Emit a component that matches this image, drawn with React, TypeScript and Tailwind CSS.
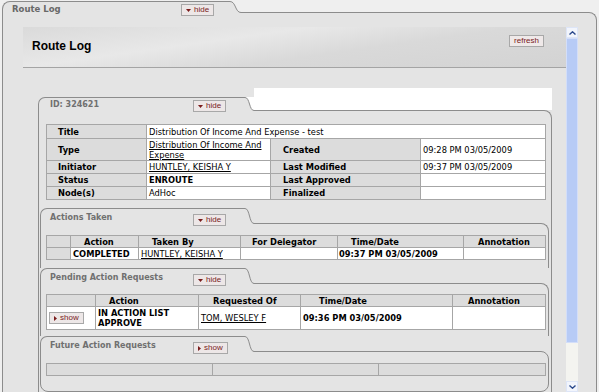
import React from 'react'

const LINE = 'border-[#8c8c8c]'
const CELL = 'border border-[#a6a6a6]'

function Curve({ h, w, above }: { h: number; w: number; above?: string }) {
  const y = h - 0.5
  return (
    <svg width={w} height={h} className="block shrink-0 relative z-10 -mb-px">
      {above && <path d={`M0 0 L${w} 0 L${w} ${y} C${w * 0.45} ${y} ${w * 0.55} 0.5 0 0.5 Z`} fill={above} />}
      <path d={`M0 0.5 C${w * 0.55} 0.5 ${w * 0.45} ${y} ${w} ${y} L${w} ${h} L0 ${h} Z`} fill="#e4e4e4" />
      <path d={`M0 0.5 C${w * 0.55} 0.5 ${w * 0.45} ${y} ${w} ${y}`} fill="none" stroke="#8c8c8c" strokeWidth="1" />
    </svg>
  )
}

function MiniButton({ label, dir }: { label: string; dir: 'down' | 'right' }) {
  return (
    <span className="flex items-center gap-[3px] h-[12px] px-[4px] border border-[#a8a8a8] bg-[#ede7e7] text-[#7a1c1c] text-[8px] leading-none font-['Liberation_Sans',Arial,sans-serif]">
      {dir === 'down' ? (
        <svg width="5" height="3"><path d="M0 0h5L2.5 3z" fill="#7a1c1c" /></svg>
      ) : (
        <svg width="3" height="5"><path d="M0 0v5l3-2.5z" fill="#7a1c1c" /></svg>
      )}
      {label}
    </span>
  )
}

interface SubProps {
  title: string
  btn: 'hide' | 'show'
  pt: string
  pb: string
  last?: boolean
  children: React.ReactNode
}

function SubSection({ title, btn, pt, pb, last, children }: SubProps) {
  return (
    <div className="flex flex-col">
      <div className="flex items-end h-[15px]">
        <div className={`relative z-10 -mb-px h-[16px] w-[205px] shrink-0 border-l border-t ${LINE} rounded-tl-[7px] bg-[#e4e4e4] flex items-start pl-[9px]`}>
          <span className="w-[143px] shrink-0 mt-[4px] text-[8px] font-bold text-[#707070] leading-[10px]">{title}</span>
          <span className="mt-[5px] flex"><MiniButton label={btn} dir={btn === 'hide' ? 'down' : 'right'} /></span>
        </div>
        <Curve h={16} w={9} />
      </div>
      <div className={`border-l border-r border-t ${LINE} rounded-tr-[8px] pl-[5px] ${pt} ${pb} ${last ? 'border-b rounded-b-[8px]' : ''}`}>
        {children}
      </div>
    </div>
  )
}

function Scrollbar() {
  return (
    <div className="w-[12px] h-full flex flex-col bg-[#f4f4f0]">
      <div className="h-[11px] flex items-center justify-center bg-[#f2f5fc] border border-[#dde5f7]">
        <svg width="7" height="4"><path d="M0.5 3.5 L3.5 0.8 L6.5 3.5" fill="none" stroke="#2b4a8c" strokeWidth="1.4" /></svg>
      </div>
      <div className="h-[305px] bg-[#b7cbf6] border border-[#d3def9]" />
      <div className="flex-1" />
      <div className="h-[11px] flex items-center justify-center bg-[#f2f5fc] border border-[#dde5f7]">
        <svg width="7" height="4"><path d="M0.5 0.5 L3.5 3.2 L6.5 0.5" fill="none" stroke="#2b4a8c" strokeWidth="1.4" /></svg>
      </div>
    </div>
  )
}

export default function App() {
  return (
    <div className="w-[599px] h-[392px] overflow-hidden bg-[#efefef] pt-[1px] pl-[2px] flex flex-col font-['DejaVu_Sans',Verdana,sans-serif] text-black leading-[10px]">
      {/* outer tab */}
      <div className="flex items-end h-[11px] shrink-0">
        <div className={`relative z-10 -mb-px h-[12px] w-[228px] shrink-0 border-l border-t ${LINE} rounded-tl-[8px] bg-[#e4e4e4] flex items-start pl-[9px]`}>
          <span className="w-[169px] shrink-0 mt-[2px] text-[8.5px] font-bold text-[#686868] leading-[10px]">Route Log</span>
          <span className="mt-[2px] flex"><MiniButton label="hide" dir="down" /></span>
        </div>
        <Curve h={12} w={11} />
      </div>

      <div className={`flex-1 min-h-0 w-[595px] border-l border-r border-t ${LINE} rounded-tr-[8px] bg-[#e4e4e4] flex pt-[14px] pl-[20px]`}>
        <div className="w-[543px] h-full overflow-hidden flex flex-col">
          {/* header bar */}
          <div className="h-[41px] shrink-0 border-b border-[#a4a4a4] bg-[linear-gradient(172deg,#dadada_0%,#e8e8e8_35%,#d9d9d9_60%,#d3d3d3_100%)] flex items-start justify-between pl-[9px] pr-[22px]">
            <span className="mt-[12px] text-[12px] font-bold leading-[14px] font-['Liberation_Sans',Arial,sans-serif]">Route Log</span>
            <span className="mt-[8px] h-[12px] px-[4px] flex items-center border border-[#a8a8a8] bg-[#efe9e9] text-[#7a1c1c] text-[8px] leading-none font-['Liberation_Sans',Arial,sans-serif]">refresh</span>
          </div>

          {/* ID section */}
          <div className="mt-[20px] ml-[15px] w-[514px] flex flex-col">
            <div className="flex items-end h-[22px]">
              <div className={`relative z-10 -mb-px h-[14px] w-[207px] shrink-0 border-l border-t ${LINE} rounded-tl-[7px] bg-[#e4e4e4] flex items-start pl-[11px]`}>
                <span className="w-[143px] shrink-0 mt-[2px] text-[8px] font-bold text-[#707070] leading-[10px]">ID: 324621</span>
                <span className="mt-[2px] flex"><MiniButton label="hide" dir="down" /></span>
              </div>
              <Curve h={14} w={9} above="#ffffff" />
              <div className="flex-1 self-stretch bg-white" />
            </div>
            <div className={`border-l border-r border-t ${LINE} rounded-tr-[8px] pt-[13px]`}>
              <div className="pl-[7px]">
                <table className="w-[499px] table-fixed border-collapse text-[8.3px] leading-[10px]">
                  <colgroup>
                    <col className="w-[100px]" />
                    <col className="w-[124px]" />
                    <col className="w-[150px]" />
                    <col className="w-[125px]" />
                  </colgroup>
                  <tbody>
                    <tr className="h-[14px]">
                      <td className={`${CELL} bg-[#dcdcdc] font-bold pl-[11px]`}>Title</td>
                      <td colSpan={3} className={`${CELL} bg-white pl-[2px]`}>Distribution Of Income And Expense - test</td>
                    </tr>
                    <tr className="h-[22px]">
                      <td className={`${CELL} bg-[#dcdcdc] font-bold pl-[11px]`}>Type</td>
                      <td className={`${CELL} bg-white pl-[2px] underline`}>Distribution Of Income And Expense</td>
                      <td className={`${CELL} bg-[#dcdcdc] font-bold pl-[12px]`}>Created</td>
                      <td className={`${CELL} bg-white pl-[2px]`}>09:28 PM 03/05/2009</td>
                    </tr>
                    <tr className="h-[13px]">
                      <td className={`${CELL} bg-[#dcdcdc] font-bold pl-[11px]`}>Initiator</td>
                      <td className={`${CELL} bg-white pl-[2px] underline`}>HUNTLEY, KEISHA Y</td>
                      <td className={`${CELL} bg-[#dcdcdc] font-bold pl-[12px]`}>Last Modified</td>
                      <td className={`${CELL} bg-white pl-[2px]`}>09:37 PM 03/05/2009</td>
                    </tr>
                    <tr className="h-[13px]">
                      <td className={`${CELL} bg-[#dcdcdc] font-bold pl-[11px]`}>Status</td>
                      <td className={`${CELL} bg-white pl-[2px] font-bold`}>ENROUTE</td>
                      <td className={`${CELL} bg-[#dcdcdc] font-bold pl-[12px]`}>Last Approved</td>
                      <td className={`${CELL} bg-white`}></td>
                    </tr>
                    <tr className="h-[13px]">
                      <td className={`${CELL} bg-[#dcdcdc] font-bold pl-[11px]`}>Node(s)</td>
                      <td className={`${CELL} bg-white pl-[2px]`}>AdHoc</td>
                      <td className={`${CELL} bg-[#dcdcdc] font-bold pl-[12px]`}>Finalized</td>
                      <td className={`${CELL} bg-white`}></td>
                    </tr>
                  </tbody>
                </table>
              </div>

              <div className="mt-[8px] ml-[1px] mr-[2px] flex flex-col">
                <SubSection title="Actions Taken" btn="hide" pt="pt-[11px]" pb="pb-[8px]">
                  <table className="w-[499px] table-fixed border-collapse text-[8.3px] leading-[10px]">
                    <colgroup>
                      <col className="w-[24px]" />
                      <col className="w-[68px]" />
                      <col className="w-[102px]" />
                      <col className="w-[97px]" />
                      <col className="w-[126px]" />
                      <col className="w-[82px]" />
                    </colgroup>
                    <tbody>
                      <tr className="h-[12px] bg-[#dcdcdc] font-bold">
                        <td className={CELL}></td>
                        <td className={`${CELL} pl-[13px]`}>Action</td>
                        <td className={`${CELL} pl-[13px]`}>Taken By</td>
                        <td className={`${CELL} pl-[11px]`}>For Delegator</td>
                        <td className={`${CELL} pl-[13px]`}>Time/Date</td>
                        <td className={`${CELL} pl-[14px]`}>Annotation</td>
                      </tr>
                      <tr className="h-[12px]">
                        <td className={`${CELL} bg-[#dcdcdc]`}></td>
                        <td className={`${CELL} bg-white pl-[2px] font-bold`}>COMPLETED</td>
                        <td className={`${CELL} bg-white pl-[2px] underline`}>HUNTLEY, KEISHA Y</td>
                        <td className={`${CELL} bg-white`}></td>
                        <td className={`${CELL} bg-white pl-[1px] font-bold`}>09:37 PM 03/05/2009</td>
                        <td className={`${CELL} bg-white`}></td>
                      </tr>
                    </tbody>
                  </table>
                </SubSection>

                <SubSection title="Pending Action Requests" btn="hide" pt="pt-[10px]" pb="pb-[6px]">
                  <table className="w-[499px] table-fixed border-collapse text-[8.3px] leading-[10px]">
                    <colgroup>
                      <col className="w-[49px]" />
                      <col className="w-[103px]" />
                      <col className="w-[102px]" />
                      <col className="w-[152px]" />
                      <col className="w-[93px]" />
                    </colgroup>
                    <tbody>
                      <tr className="h-[12px] bg-[#dcdcdc] font-bold">
                        <td className={CELL}></td>
                        <td className={`${CELL} pl-[13px]`}>Action</td>
                        <td className={`${CELL} pl-[14px]`}>Requested Of</td>
                        <td className={`${CELL} pl-[18px]`}>Time/Date</td>
                        <td className={`${CELL} pl-[15px]`}>Annotation</td>
                      </tr>
                      <tr className="h-[23px] bg-white">
                        <td className={`${CELL} pl-[2px]`}><span className="inline-flex"><MiniButton label="show" dir="right" /></span></td>
                        <td className={`${CELL} pl-[2px] font-bold`}>IN ACTION LIST<br />APPROVE</td>
                        <td className={`${CELL} pl-[2px] underline`}>TOM, WESLEY F</td>
                        <td className={`${CELL} pl-[2px] font-bold`}>09:36 PM 03/05/2009</td>
                        <td className={CELL}></td>
                      </tr>
                    </tbody>
                  </table>
                </SubSection>

                <SubSection title="Future Action Requests" btn="show" pt="pt-[11px]" pb="pb-[15px]" last>
                  <table className="w-[499px] table-fixed border-collapse">
                    <tbody>
                      <tr className="h-[12px] bg-[#dcdcdc]">
                        <td className={`${CELL} w-[166px]`}></td>
                        <td className={`${CELL} w-[166px]`}></td>
                        <td className={`${CELL} w-[167px]`}></td>
                      </tr>
                    </tbody>
                  </table>
                </SubSection>
              </div>
              <div className="h-[20px]" />
            </div>
          </div>
        </div>
        <Scrollbar />
      </div>
    </div>
  )
}
